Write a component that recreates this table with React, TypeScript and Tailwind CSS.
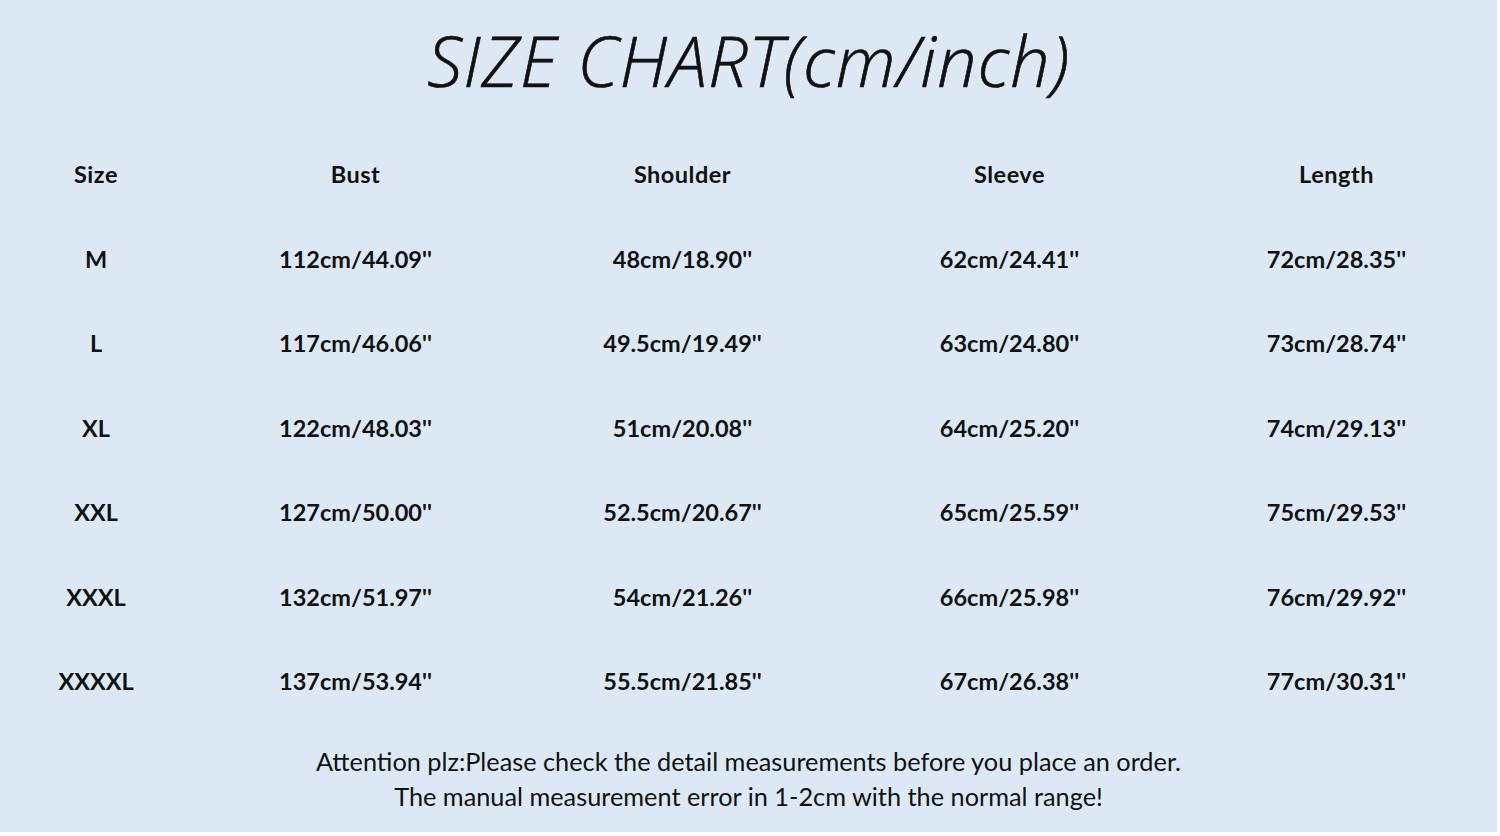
import React from "react";

const headers = ["Size", "Bust", "Shoulder", "Sleeve", "Length"];
const rows = [
  ["M", "112cm/44.09''", "48cm/18.90''", "62cm/24.41''", "72cm/28.35''"],
  ["L", "117cm/46.06''", "49.5cm/19.49''", "63cm/24.80''", "73cm/28.74''"],
  ["XL", "122cm/48.03''", "51cm/20.08''", "64cm/25.20''", "74cm/29.13''"],
  ["XXL", "127cm/50.00''", "52.5cm/20.67''", "65cm/25.59''", "75cm/29.53''"],
  ["XXXL", "132cm/51.97''", "54cm/21.26''", "66cm/25.98''", "76cm/29.92''"],
  ["XXXXL", "137cm/53.94''", "55.5cm/21.85''", "67cm/26.38''", "77cm/30.31''"],
];

export default function App() {
  return (
    <div className="w-[1500px] h-[836px] bg-white flex flex-col">
      <div className="w-[1497px] h-[832px] bg-[#dce9f5] flex flex-col text-[#111]">
        <div className="h-[133px] flex items-center justify-center">
          <h1
            className="text-[70px] italic font-light tracking-[1px] leading-none mt-[-13px] [-webkit-text-stroke:0.6px_#111]"
            style={{ fontFamily: '"Open Sans", sans-serif' }}
          >
            SIZE CHART(cm/inch)
          </h1>
        </div>
        <div
          className="grid grid-cols-[192px_327px_327px_327px_327px] font-bold text-[23.5px]"
          style={{ fontFamily: "Lato, sans-serif" }}
        >
          {headers.map((h) => (
            <div key={h} className="h-[84px] flex items-center justify-center tracking-[0.5px]">
              {h}
            </div>
          ))}
          {rows.map((r) =>
            r.map((c, i) => (
              <div key={r[0] + i} className="h-[84.5px] flex items-center justify-center">
                {c}
              </div>
            ))
          )}
        </div>
        <div
          className="flex flex-col items-center text-[25.3px] leading-[35px] mt-[20px]"
          style={{ fontFamily: "Lato, sans-serif" }}
        >
          <p>Attention plz:Please check the detail measurements before you place an order.</p>
          <p>The manual measurement error in 1-2cm with the normal range!</p>
        </div>
      </div>
    </div>
  );
}
